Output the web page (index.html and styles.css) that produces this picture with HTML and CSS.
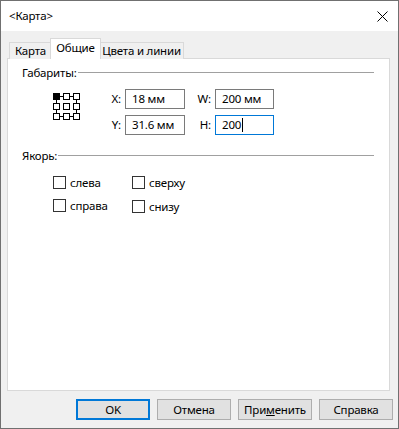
FILE: index.html
```html
<!DOCTYPE html>
<html lang="ru">
<head>
<meta charset="utf-8">
<title>Карта</title>
<link rel="stylesheet" href="styles.css">
</head>
<body>
<div class="window">
  <div class="titlebar">
    <span class="title">&lt;Карта&gt;</span>
    <svg class="close" width="12" height="12" viewBox="0 0 12 12"><path d="M0.5 0.5L10.5 10.5M10.5 0.5L0.5 10.5" stroke="#000" stroke-width="1" fill="none"/></svg>
  </div>
  <div class="body">
    <div class="tabs">
      <div class="tab tab-map">Карта</div>
      <div class="tab tab-active">Общие</div>
      <div class="tab tab-colors">Цвета и линии</div>
    </div>
    <div class="panel">
      <div class="group-head"><span>Габариты:</span><span class="rule"></span></div>
      <div class="dims">
        <svg class="anchor-icon" width="28" height="28" viewBox="0 0 28 28">
          <g stroke="#000" stroke-width="1" fill="#fff">
            <path d="M7 3.5H10M17 3.5H20M7 23.5H10M17 23.5H20M3.5 7V10M3.5 17V20M23.5 7V10M23.5 17V20" fill="none"/>
            <rect x="0.5" y="0.5" width="6" height="6" fill="#000"/>
            <rect x="10.5" y="0.5" width="6" height="6"/>
            <rect x="20.5" y="0.5" width="6" height="6"/>
            <rect x="0.5" y="10.5" width="6" height="6"/>
            <rect x="10.5" y="10.5" width="6" height="6"/>
            <rect x="20.5" y="10.5" width="6" height="6"/>
            <rect x="0.5" y="20.5" width="6" height="6"/>
            <rect x="10.5" y="20.5" width="6" height="6"/>
            <rect x="20.5" y="20.5" width="6" height="6"/>
          </g>
        </svg>
        <div class="fields">
          <span class="lbl">X:</span><div class="field">18 мм</div>
          <span class="lbl">W:</span><div class="field">200 мм</div>
          <span class="lbl">Y:</span><div class="field">31.6 мм</div>
          <span class="lbl">H:</span><div class="field field-focus">200<span class="caret"></span></div>
        </div>
      </div>
      <div class="group-head group-anchor"><span>Якорь:</span><span class="rule"></span></div>
      <div class="checks">
        <label class="check"><span class="box"></span>слева</label>
        <label class="check"><span class="box"></span>сверху</label>
        <label class="check"><span class="box"></span>справа</label>
        <label class="check check-low"><span class="box"></span>снизу</label>
      </div>
    </div>
    <div class="buttons">
      <button class="btn btn-default">OK</button>
      <button class="btn">Отмена</button>
      <button class="btn">При<u>м</u>енить</button>
      <button class="btn">Справка</button>
    </div>
  </div>
</div>
</body>
</html>
```

FILE: styles.css
```css
* { box-sizing: border-box; }
html, body { margin: 0; padding: 0; background: #fff; }
body {
  font-family: "Noto Sans", "Open Sans", sans-serif;
  font-size: 11.5px;
  letter-spacing: -0.2px;
  color: #000;
}

.window {
  width: 399px;
  height: 429px;
  border: 1px solid #707070;
  display: flex;
  flex-direction: column;
  background: #f0f0f0;
}

.titlebar {
  height: 30px;
  background: #fff;
  display: flex;
  align-items: center;
  justify-content: space-between;
  padding: 0 9px 0 8px;
  flex: none;
}
.title { line-height: 16px; }
.close { display: block; margin-top: 1px; }

.body {
  flex: 1;
  display: flex;
  flex-direction: column;
  padding: 7px 8px 0 6px;
}

.tabs {
  display: flex;
  align-items: flex-end;
  height: 21px;
  margin-left: 2px;
  margin-bottom: -1px;
  position: relative;
  z-index: 1;
}
.tab {
  height: 17px;
  border: 1px solid #d9d9d9;
  border-bottom: none;
  background: #f0f0f0;
  text-align: center;
  line-height: 16px;
  white-space: nowrap;
}
.tab-map { width: 43px; }
.tab-colors { width: 85px; }
.tab-active {
  width: 51px;
  height: 21px;
  line-height: 18px;
  background: #fff;
  margin: 0 -2px;
  position: relative;
  z-index: 2;
}

.panel {
  width: 383px;
  height: 333px;
  background: #fff;
  border: 1px solid #d9d9d9;
  padding: 6px 15px 0 14px;
  flex: none;
}

.group-head {
  display: flex;
  align-items: center;
  height: 16px;
  line-height: 16px;
}
.rule {
  flex: 1;
  border-top: 1px solid #a0a0a0;
  margin-left: 1px;
  margin-top: -1px;
}

.dims {
  display: flex;
  align-items: flex-start;
  margin-top: 8px;
  padding-left: 31px;
}
.anchor-icon { display: block; margin-top: 4px; flex: none; }

.fields {
  display: grid;
  grid-template-columns: 16px 60px 22px 59px;
  grid-auto-rows: 20px;
  column-gap: 4px;
  row-gap: 6px;
  margin-left: 24px;
  align-items: center;
}
.lbl { text-align: right; line-height: 16px; }
.field {
  height: 20px;
  border: 1px solid #7a7a7a;
  padding: 0 0 0 6px;
  line-height: 18px;
  display: flex;
  align-items: center;
  white-space: nowrap;
}
.field-focus { border-color: #0078d7; }
.caret {
  display: inline-block;
  width: 1px;
  height: 14px;
  background: #000;
  margin-left: 1px;
}

.group-anchor { margin-top: 13px; }

.checks {
  display: grid;
  grid-template-columns: 79px 79px;
  grid-auto-rows: 17px;
  row-gap: 6px;
  margin-top: 10px;
  padding-left: 31px;
}
.check {
  display: flex;
  align-items: center;
  gap: 4px;
  line-height: 17px;
}
.check-low { margin-top: 2px; }
.box {
  width: 13px;
  height: 13px;
  border: 1px solid #333;
  background: #fff;
  flex: none;
}

.buttons {
  display: flex;
  justify-content: flex-end;
  gap: 7px;
  margin-top: 8px;
  margin-right: -3px;
}
.btn {
  width: 74px;
  height: 21px;
  border: 1px solid #adadad;
  background: #e1e1e1;
  font-family: "Noto Sans", "Open Sans", sans-serif;
  font-size: 11.5px;
  letter-spacing: -0.2px;
  font-weight: normal;
  color: #000;
  padding: 0;
  line-height: 17px;
}
.btn u { text-decoration: underline; }
.btn-default { border: 2px solid #0078d7; }
```
